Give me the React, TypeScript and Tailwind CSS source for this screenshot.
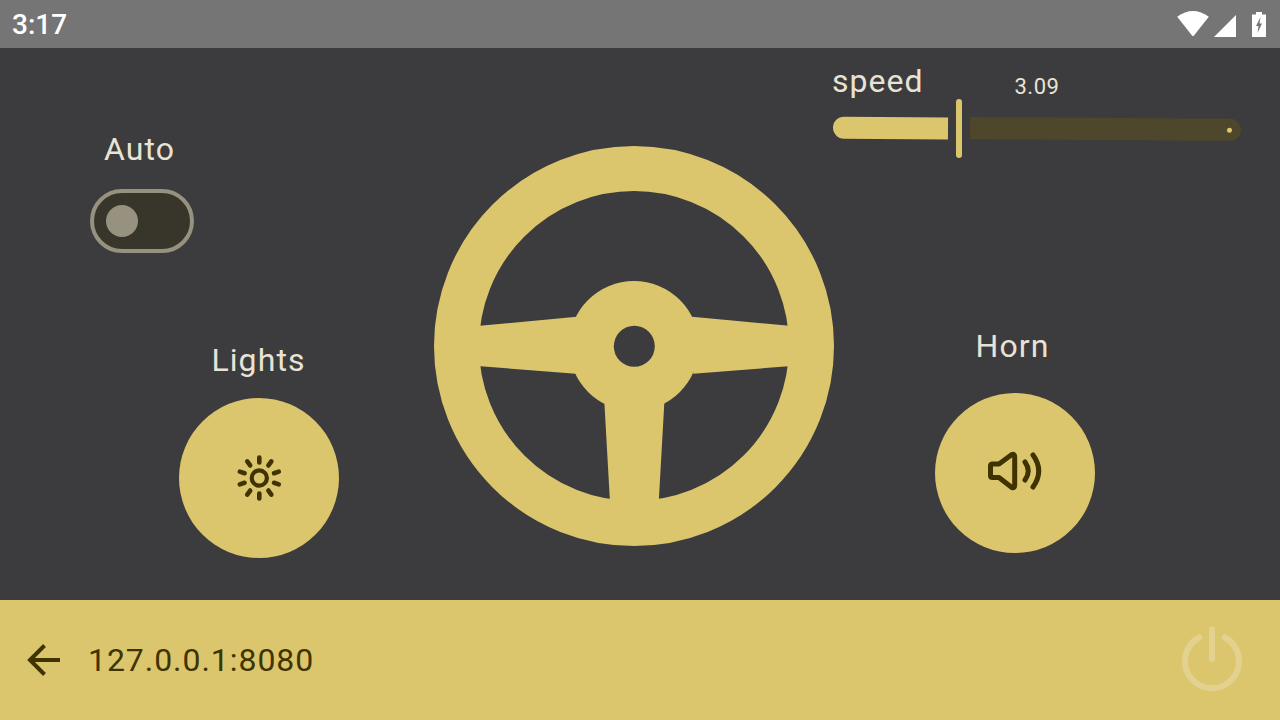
import React from "react";

const font = { fontFamily: "Roboto, sans-serif" };

function StatusIcons() {
  return (
    <div className="flex items-center">
      <svg width="32" height="26" viewBox="0 0 32 26">
        <path d="M0.2 5.8 Q16 -5.6 31.8 5.8 L17 24.5 Q16 25.5 15 24.5 Z" fill="#ffffff" />
      </svg>
      <svg width="22" height="22" viewBox="0 0 22 22" className="ml-[5px] mt-[4px]">
        <path d="M0 22 L22 0 V22 Z" fill="#ffffff" />
      </svg>
      <svg width="14" height="25" viewBox="0 0 14 25" className="ml-[16px]">
        <path d="M4 0 H10 V2.5 H14 V25 H0 V2.5 H4 Z" fill="#ffffff" />
        <path d="M8.5 5 L4 14 H6.5 L5.5 21 L10 11.5 H7.5 Z" fill="#757575" />
      </svg>
    </div>
  );
}

function SunIcon() {
  const angles = [0, 36, 72, 108, 144, 180, 216, 252, 288, 324];
  return (
    <svg width="48" height="48" viewBox="-24 -24 48 48">
      <circle cx="0.3" cy="0" r="7.6" fill="none" stroke="#3f3400" strokeWidth="4.2" />
      {angles.map((a) => {
        const r = (a * Math.PI) / 180;
        return (
          <line
            key={a}
            x1={0.3 + Math.sin(r) * 15.5}
            y1={-Math.cos(r) * 15.5}
            x2={0.3 + Math.sin(r) * 20.5}
            y2={-Math.cos(r) * 20.5}
            stroke="#3f3400"
            strokeWidth="4.6"
            strokeLinecap="round"
          />
        );
      })}
    </svg>
  );
}

function HornIcon() {
  return (
    <svg width="80" height="80" viewBox="0 0 80 80" fill="none" stroke="#3f3400" strokeWidth="5" strokeLinecap="round" strokeLinejoin="round">
      <path d="M17.5 31 H24 L36.5 21.8 Q39.7 20 39.7 24 V52 Q39.7 56 36.5 54.2 L24 44.5 H17.5 Q15.5 44.5 15.5 42.5 V33 Q15.5 31 17.5 31 Z" />
      <path d="M50 29 Q56.5 38 50 47" />
      <path d="M58 22 Q69.5 38 58 54" />
    </svg>
  );
}

function Wheel() {
  return (
    <svg width="400" height="400" viewBox="0 0 400 400" className="block">
      <circle cx="200" cy="200" r="177.5" fill="none" stroke="#dbc66e" strokeWidth="45" />
      <circle cx="200" cy="200" r="65" fill="#dbc66e" />
      <path d="M26.7 181.6 L142.7 170.7 L141.7 227.7 L26.7 218.8 Z" fill="#dbc66e" />
      <path d="M374 181.6 L258 170.7 L259.3 227.7 L374 218.8 Z" fill="#dbc66e" />
      <path d="M170 250 L177 374 L223.7 374 L230.7 250 Z" fill="#dbc66e" />
      <circle cx="200.3" cy="200.3" r="20.5" fill="#3c3c3e" />
    </svg>
  );
}

export default function App() {
  return (
    <div className="w-[1280px] h-[720px] flex flex-col overflow-hidden bg-[#3c3c3e]" style={font}>
      <div className="h-12 bg-[#757575] flex items-center justify-between pl-3 pr-[14px]">
        <span className="text-[28px] leading-[48px] font-medium text-white mt-[2px]">3:17</span>
        <StatusIcons />
      </div>

      <div className="h-[552px] flex">
        <div className="w-[434px] flex flex-col">
          <div className="ml-[90px] mt-[82px] w-[104px] flex flex-col items-center">
            <span className="text-[32px] leading-[38px] tracking-[1.1px] text-[#e9e3d5] -ml-[5px]">Auto</span>
            <div className="mt-[21px] w-[104px] h-16 rounded-full border-4 border-[#97917f] bg-[#38352a] flex items-center pl-3">
              <div className="w-8 h-8 rounded-full bg-[#97917f]" />
            </div>
          </div>
          <div className="ml-[179px] mt-[88px] w-40 flex flex-col items-center">
            <span className="text-[32px] leading-[38px] tracking-[1.1px] text-[#e9e3d5] -ml-[1px]">Lights</span>
            <div className="mt-[19px] w-40 h-40 rounded-full bg-[#dbc66e] flex items-center justify-center">
              <SunIcon />
            </div>
          </div>
        </div>

        <div className="w-[400px] pt-[98px]">
          <Wheel />
        </div>

        <div className="flex-1 flex flex-col">
          <div className="flex items-start mt-[14px] -ml-[2px]">
            <span className="text-[32px] leading-[38px] tracking-[1px] text-[#e9e3d5]">speed</span>
            <span className="text-[22px] leading-[26px] tracking-[0.5px] text-[#e9e3d5] ml-[91px] mt-[12px]">3.09</span>
          </div>
          <div className="flex items-center h-[60px] -mt-[2px] -ml-[1px]">
            <div className="w-[115px] h-[22px] rounded-l-full rounded-r-[2px] bg-[#dbc66e] rotate-[0.4deg]" />
            <div className="w-[6px] h-[59px] rounded-full bg-[#dbc66e] ml-[8px]" />
            <div className="w-[271px] h-[22px] ml-[8px] mt-[2px] rounded-r-full rounded-l-[2px] bg-[#4e472b] rotate-[0.4deg] flex items-center justify-end pr-[9px]">
              <div className="w-[5px] h-[5px] rounded-full bg-[#dbc66e]" />
            </div>
          </div>
          <div className="ml-[101px] mt-[169px] w-40 flex flex-col items-center">
            <span className="text-[32px] leading-[38px] tracking-[1.1px] text-[#e9e3d5] -ml-[5px]">Horn</span>
            <div className="mt-[28px] w-40 h-40 rounded-full bg-[#dbc66e] flex items-center justify-center">
              <HornIcon />
            </div>
          </div>
        </div>
      </div>

      <div className="h-[120px] bg-[#dbc66e] flex items-center justify-between pl-[24px] pr-[36px]">
        <div className="flex items-center">
          <svg width="40" height="40" viewBox="0 0 40 40" fill="none" stroke="#3f3400" strokeWidth="4">
            <path d="M36 20 H7" />
            <path d="M20.5 5.5 L6 20 L20.5 34.5" />
          </svg>
          <span className="ml-[24px] text-[32px] leading-[40px] tracking-[0.95px] text-[#3f3400]">127.0.0.1:8080</span>
        </div>
        <svg width="64" height="68" viewBox="0 0 64 68" fill="none" stroke="#e3d28f" strokeWidth="6" strokeLinecap="round">
          <path d="M32 3.5 V33" />
          <path d="M19 11.5 A27 27 0 1 0 45 11.5" />
        </svg>
      </div>
    </div>
  );
}
